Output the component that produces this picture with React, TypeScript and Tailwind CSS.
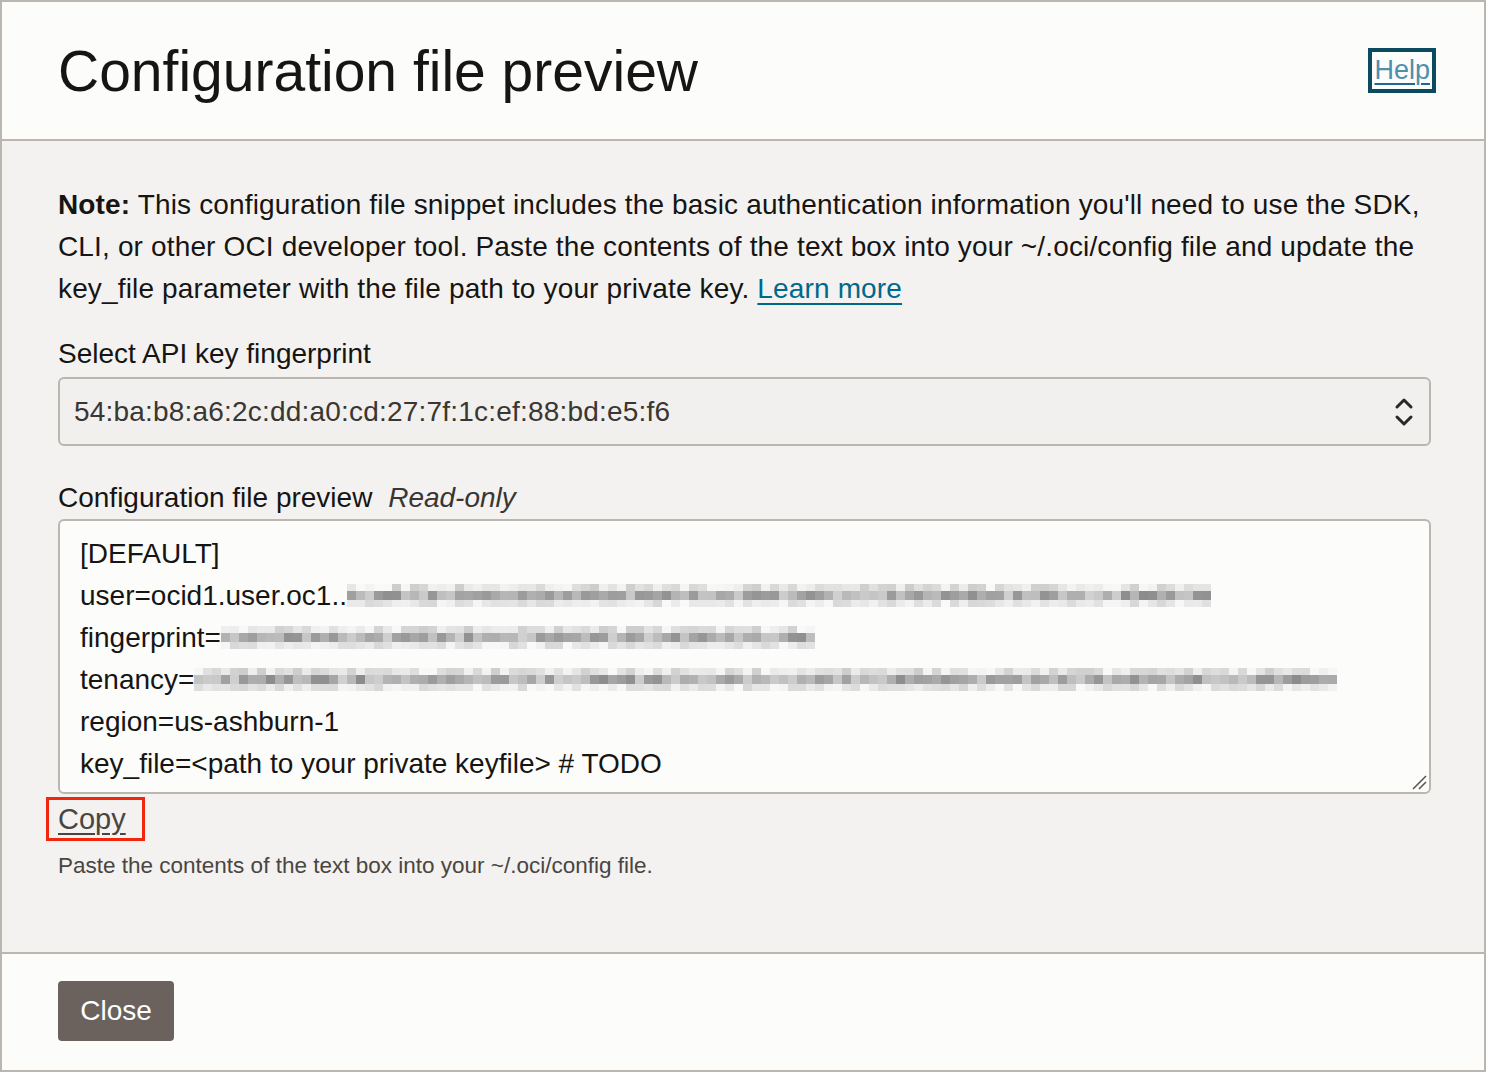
import React from "react";

function rand(seed: number) {
  let s = seed;
  return () => {
    s = (s * 1103515245 + 12345) % 2147483648;
    return s / 2147483648;
  };
}

function Mosaic({ width, seed }: { width: number; seed: number }) {
  const r = rand(seed);
  const cols = Math.floor(width / 9);
  const cells = [] as React.ReactNode[];
  for (let i = 0; i < cols; i++) {
    const top = 205 + Math.floor(r() * 45);
    const mid = 140 + Math.floor(r() * 70);
    const bot = 215 + Math.floor(r() * 35);
    cells.push(
      <div key={i} className="flex flex-col w-[9px]">
        <div className="h-[7px]" style={{ background: `rgb(${top},${top},${top})` }} />
        <div className="h-[9px]" style={{ background: `rgb(${mid},${mid},${mid})` }} />
        <div className="h-[7px]" style={{ background: `rgb(${bot},${bot},${bot})` }} />
      </div>
    );
  }
  return <span className="inline-flex align-middle -mt-[4px]">{cells}</span>;
}

export default function App() {
  const font = { fontFamily: '"Liberation Sans", Arial, sans-serif' };
  return (
    <div className="w-[1486px] h-[1072px] overflow-hidden border-2 border-[#bcb6b0] flex flex-col text-[#161513]" style={font}>
      <header className="h-[139px] shrink-0 bg-[#fcfcfa] border-b-2 border-[#bcb6b0] flex items-center justify-between pl-[56px] pr-[48px]">
        <h1 className="text-[57px] leading-none pt-[2px]">Configuration file preview</h1>
        <a className="border-[4px] border-[#0c4a5f] px-[2px] h-[45px] flex items-center text-[27px] font-light text-[#4f8fae] underline decoration-[#1a6c8e] decoration-[2px] underline-offset-[4px]">Help</a>
      </header>
      <main className="flex-1 bg-[#f3f2f0] border-b-2 border-[#bcb6b0] pl-[56px] pr-[53px] pt-[43px]">
        <div className="text-[28px] leading-[42px] tracking-[0.15px] text-[#161513] whitespace-nowrap">
          <div>
            <span className="font-bold">Note:</span> This configuration file snippet includes the basic authentication information you'll need to use the SDK,
          </div>
          <div>CLI, or other OCI developer tool. Paste the contents of the text box into your ~/.oci/config file and update the</div>
          <div>
            key_file parameter with the file path to your private key.{" "}
            <a className="text-[#00688c] underline underline-offset-[5px] decoration-[2px]">Learn more</a>
          </div>
        </div>
        <div className="mt-[28px] text-[28px] leading-[32px]">Select API key fingerprint</div>
        <div className="mt-[7px] h-[69px] rounded-[6px] border-2 border-[#bcb6b0] bg-[#f1f0ee] flex items-center justify-between pl-[14px] pr-[14px]">
          <span className="text-[28px] tracking-[0.2px] text-[#3a3632]">54:ba:b8:a6:2c:dd:a0:cd:27:7f:1c:ef:88:bd:e5:f6</span>
          <svg width="22" height="34" viewBox="0 0 22 34" fill="none" stroke="#2b2724" strokeWidth="3" strokeLinecap="round" strokeLinejoin="round">
            <path d="M4 12 L11 5 L18 12" />
            <path d="M4 22 L11 29 L18 22" />
          </svg>
        </div>
        <div className="mt-[36px] text-[28px] leading-[32px]">
          Configuration file preview <span className="italic text-[#3a3632] ml-[8px]">Read-only</span>
        </div>
        <div className="relative mt-[5px] h-[275px] rounded-[6px] border-2 border-[#bcb6b0] bg-[#fcfcfa] pl-[20px] pt-[12px] text-[28px] leading-[42px] text-[#161513]">
          <div>[DEFAULT]</div>
          <div className="whitespace-nowrap">user=ocid1.user.oc1..<Mosaic width={865} seed={7} /></div>
          <div className="whitespace-nowrap">fingerprint=<Mosaic width={595} seed={19} /></div>
          <div className="whitespace-nowrap">tenancy=<Mosaic width={1146} seed={31} /></div>
          <div>region=us-ashburn-1</div>
          <div>key_file=&lt;path to your private keyfile&gt; # TODO</div>
          <svg className="absolute right-[2px] bottom-[2px]" width="16" height="16" viewBox="0 0 16 16" stroke="#5a5551" strokeWidth="1.6">
            <path d="M2 15 L15 2" />
            <path d="M8 15 L15 8" />
          </svg>
        </div>
        <div className="mt-[3px] -ml-[12px] flex w-[99px] border-[3px] border-[#f1270d] h-[44px] items-center pl-[9px]">
          <a className="text-[29px] leading-none text-[#4a4541] underline underline-offset-[4px] decoration-[2px]">Copy</a>
        </div>
        <div className="mt-[12px] text-[22.5px] leading-[26px] text-[#4a4541]">Paste the contents of the text box into your ~/.oci/config file.</div>
      </main>
      <footer className="h-[116px] shrink-0 bg-[#fcfcfa] flex items-center pl-[56px]">
        <button className="h-[60px] w-[116px] rounded-[4px] bg-[#6b625e] text-white text-[28px] -mt-[2px]" style={font}>Close</button>
      </footer>
    </div>
  );
}
